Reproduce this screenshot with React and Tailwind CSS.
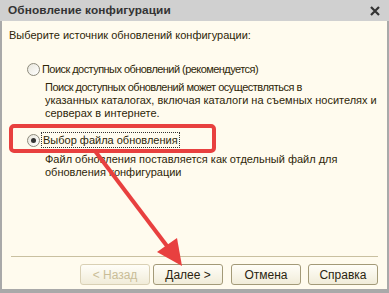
import React from "react";

const Radio = ({ checked }) => (
  <span className="relative inline-flex w-[13px] h-[13px] shrink-0 items-center justify-center rounded-full border border-[#8d8a7c] bg-gradient-to-br from-[#e8e6dc] to-white">
    {checked && <span className="w-[5px] h-[5px] rounded-full bg-[#333]" />}
  </span>
);

const Button = ({ children, disabled }) => (
  <button
    className={`w-[70px] h-[21px] rounded-[3px] border text-[12px] leading-none bg-gradient-to-b from-[#fffef8] to-[#f1ecd9] ${
      disabled ? "border-[#d9d0b4] text-[#c9bd97]" : "border-[#a39a78] text-[#2a2410]"
    }`}
  >
    {children}
  </button>
);

const App = () => {
  return (
    <div
      className="relative w-[389px] h-[293px] flex flex-col bg-[#a9a9a9] px-[2px] pb-[4px] overflow-hidden"
      style={{ fontFamily: '"Liberation Sans", Arial, sans-serif' }}
    >
      <div className="h-[21px] -mx-[2px] px-[8px] flex items-center justify-between bg-[#d0d0d0]">
        <span className="text-[11.8px] font-bold text-[#333] tracking-[0.1px] whitespace-nowrap">
          Обновление конфигурации
        </span>
        <svg width="10" height="10" viewBox="0 0 10 10" className="mr-[1px]">
          <path d="M1 1 L9 9 M9 1 L1 9" stroke="#333" strokeWidth="2.2" />
        </svg>
      </div>
      <div className="flex-1 flex flex-col bg-[#fffbee] text-[11px] text-[#2e2608] pl-[7px] pr-[6px] whitespace-nowrap">
        <div className="mt-[7px] leading-[14px]">Выберите источник обновлений конфигурации:</div>
        <div className="mt-[20px] ml-[18px] flex items-center gap-[2px] leading-[14px]">
          <Radio />
          <span className="tracking-[-0.55px]">Поиск доступных обновлений (рекомендуется)</span>
        </div>
        <div className="ml-[36px] mt-[5px] leading-[13px]">
          <span className="tracking-[-0.5px]">Поиск доступных обновлений может осуществляться в</span>
          <br />
          указанных каталогах, включая каталоги на съемных носителях и
          <br />
          серверах в интернете.
        </div>
        <div className="mt-[12px] ml-[18px] flex items-center gap-[1px] leading-[14px]">
          <Radio checked />
          <span className="border border-dotted border-[#333] px-[1px]">Выбор файла обновления</span>
        </div>
        <div className="ml-[36px] mt-[5px] leading-[13px]">
          Файл обновления поставляется как отдельный файл для
          <br />
          обновления конфигурации
        </div>
        <div className="flex-1" />
        <div className="h-px bg-[#c9c0a0] mr-[3px] ml-[2px]" />
        <div className="flex justify-end mt-[7px] mb-[4px] mr-[3px]">
          <Button disabled>&lt; Назад</Button>
          <div className="ml-[3px]">
            <Button>Далее &gt;</Button>
          </div>
          <div className="ml-[8px]">
            <Button>Отмена</Button>
          </div>
          <div className="ml-[7px]">
            <Button>Справка</Button>
          </div>
        </div>
      </div>

      <div className="absolute left-[9px] top-[124px] w-[207px] h-[29px] rounded-[5px] border-[4px] border-[#e8403f] pointer-events-none" />
      <svg className="absolute left-0 top-0 pointer-events-none" width="389" height="293">
        <line x1="95" y1="151" x2="170" y2="250" stroke="#e8403f" strokeWidth="4" />
        <polygon points="182,266 157,252 177,238" fill="#e8403f" />
      </svg>
    </div>
  );
};

export default App;
